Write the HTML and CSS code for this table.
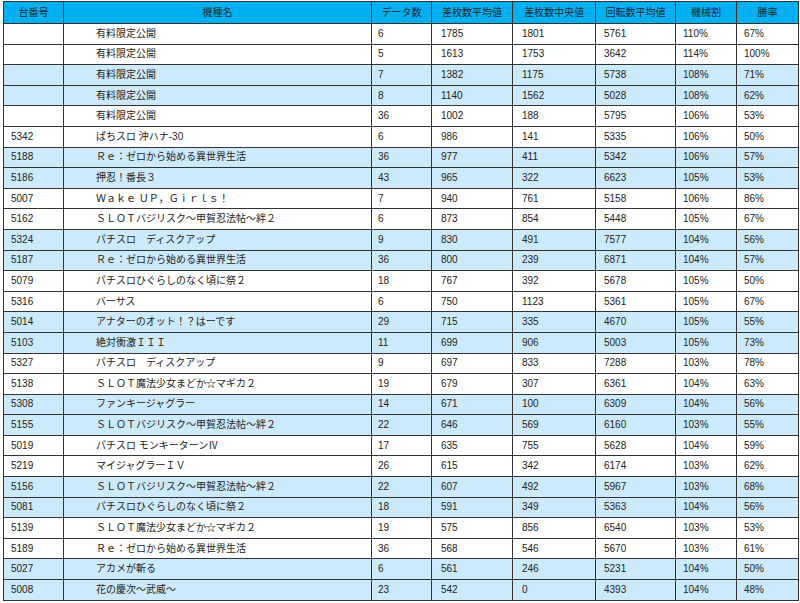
FILE: index.html
```html
<!DOCTYPE html>
<html lang="ja">
<head>
<meta charset="utf-8">
<title>機種別データ</title>
<link rel="stylesheet" href="styles.css">
</head>
<body>
<table class="data">
<colgroup>
<col class="c-no"><col class="c-name"><col class="c-cnt"><col class="c-avg"><col class="c-med"><col class="c-rot"><col class="c-rate"><col class="c-win">
</colgroup>
<thead>
<tr><th>台番号</th><th>機種名</th><th>データ数</th><th>差枚数平均値</th><th>差枚数中央値</th><th>回転数平均値</th><th>機械割</th><th>勝率</th></tr>
</thead>
<tbody>
<tr><td></td><td class="name">有料限定公開</td><td class="cnt">6</td><td class="avg">1785</td><td class="med">1801</td><td class="rot">5761</td><td>110%</td><td>67%</td></tr>
<tr><td></td><td class="name">有料限定公開</td><td class="cnt">5</td><td class="avg">1613</td><td class="med">1753</td><td class="rot">3642</td><td>114%</td><td>100%</td></tr>
<tr class="alt"><td></td><td class="name">有料限定公開</td><td class="cnt">7</td><td class="avg">1382</td><td class="med">1175</td><td class="rot">5738</td><td>108%</td><td>71%</td></tr>
<tr class="alt"><td></td><td class="name">有料限定公開</td><td class="cnt">8</td><td class="avg">1140</td><td class="med">1562</td><td class="rot">5028</td><td>108%</td><td>62%</td></tr>
<tr><td></td><td class="name">有料限定公開</td><td class="cnt">36</td><td class="avg">1002</td><td class="med">188</td><td class="rot">5795</td><td>106%</td><td>53%</td></tr>
<tr><td>5342</td><td class="name">ぱちスロ 沖ハナ-30</td><td class="cnt">6</td><td class="avg">986</td><td class="med">141</td><td class="rot">5335</td><td>106%</td><td>50%</td></tr>
<tr class="alt"><td>5188</td><td class="name">Ｒｅ：ゼロから始める異世界生活</td><td class="cnt">36</td><td class="avg">977</td><td class="med">411</td><td class="rot">5342</td><td>106%</td><td>57%</td></tr>
<tr class="alt"><td>5186</td><td class="name">押忍！番長３</td><td class="cnt">43</td><td class="avg">965</td><td class="med">322</td><td class="rot">6623</td><td>105%</td><td>53%</td></tr>
<tr><td>5007</td><td class="name">Ｗａｋｅ ＵＰ，Ｇｉｒｌｓ！</td><td class="cnt">7</td><td class="avg">940</td><td class="med">761</td><td class="rot">5158</td><td>106%</td><td>86%</td></tr>
<tr><td>5162</td><td class="name">ＳＬＯＴバジリスク～甲賀忍法帖～絆２</td><td class="cnt">6</td><td class="avg">873</td><td class="med">854</td><td class="rot">5448</td><td>105%</td><td>67%</td></tr>
<tr class="alt"><td>5324</td><td class="name">パチスロ　ディスクアップ</td><td class="cnt">9</td><td class="avg">830</td><td class="med">491</td><td class="rot">7577</td><td>104%</td><td>56%</td></tr>
<tr class="alt"><td>5187</td><td class="name">Ｒｅ：ゼロから始める異世界生活</td><td class="cnt">36</td><td class="avg">800</td><td class="med">239</td><td class="rot">6871</td><td>104%</td><td>57%</td></tr>
<tr><td>5079</td><td class="name">パチスロひぐらしのなく頃に祭２</td><td class="cnt">18</td><td class="avg">767</td><td class="med">392</td><td class="rot">5678</td><td>105%</td><td>50%</td></tr>
<tr><td>5316</td><td class="name">バーサス</td><td class="cnt">6</td><td class="avg">750</td><td class="med">1123</td><td class="rot">5361</td><td>105%</td><td>67%</td></tr>
<tr class="alt"><td>5014</td><td class="name">アナターのオット！？はーです</td><td class="cnt">29</td><td class="avg">715</td><td class="med">335</td><td class="rot">4670</td><td>105%</td><td>55%</td></tr>
<tr class="alt"><td>5103</td><td class="name">絶対衝激ＩＩＩ</td><td class="cnt">11</td><td class="avg">699</td><td class="med">906</td><td class="rot">5003</td><td>105%</td><td>73%</td></tr>
<tr><td>5327</td><td class="name">パチスロ　ディスクアップ</td><td class="cnt">9</td><td class="avg">697</td><td class="med">833</td><td class="rot">7288</td><td>103%</td><td>78%</td></tr>
<tr><td>5138</td><td class="name">ＳＬＯＴ魔法少女まどか☆マギカ２</td><td class="cnt">19</td><td class="avg">679</td><td class="med">307</td><td class="rot">6361</td><td>104%</td><td>63%</td></tr>
<tr class="alt"><td>5308</td><td class="name">ファンキージャグラー</td><td class="cnt">14</td><td class="avg">671</td><td class="med">100</td><td class="rot">6309</td><td>104%</td><td>56%</td></tr>
<tr class="alt"><td>5155</td><td class="name">ＳＬＯＴバジリスク～甲賀忍法帖～絆２</td><td class="cnt">22</td><td class="avg">646</td><td class="med">569</td><td class="rot">6160</td><td>103%</td><td>55%</td></tr>
<tr><td>5019</td><td class="name">パチスロ モンキーターンⅣ</td><td class="cnt">17</td><td class="avg">635</td><td class="med">755</td><td class="rot">5628</td><td>104%</td><td>59%</td></tr>
<tr><td>5219</td><td class="name">マイジャグラーＩＶ</td><td class="cnt">26</td><td class="avg">615</td><td class="med">342</td><td class="rot">6174</td><td>103%</td><td>62%</td></tr>
<tr class="alt"><td>5156</td><td class="name">ＳＬＯＴバジリスク～甲賀忍法帖～絆２</td><td class="cnt">22</td><td class="avg">607</td><td class="med">492</td><td class="rot">5967</td><td>103%</td><td>68%</td></tr>
<tr class="alt"><td>5081</td><td class="name">パチスロひぐらしのなく頃に祭２</td><td class="cnt">18</td><td class="avg">591</td><td class="med">349</td><td class="rot">5363</td><td>104%</td><td>56%</td></tr>
<tr><td>5139</td><td class="name">ＳＬＯＴ魔法少女まどか☆マギカ２</td><td class="cnt">19</td><td class="avg">575</td><td class="med">856</td><td class="rot">6540</td><td>103%</td><td>53%</td></tr>
<tr><td>5189</td><td class="name">Ｒｅ：ゼロから始める異世界生活</td><td class="cnt">36</td><td class="avg">568</td><td class="med">546</td><td class="rot">5670</td><td>103%</td><td>61%</td></tr>
<tr class="alt"><td>5027</td><td class="name">アカメが斬る</td><td class="cnt">6</td><td class="avg">561</td><td class="med">246</td><td class="rot">5231</td><td>104%</td><td>50%</td></tr>
<tr class="alt"><td>5008</td><td class="name">花の慶次～武威～</td><td class="cnt">23</td><td class="avg">542</td><td class="med">0</td><td class="rot">4393</td><td>104%</td><td>48%</td></tr>
</tbody>
</table>
</body>
</html>
```

FILE: styles.css
```css
html, body {
  margin: 0;
  padding: 0;
  background: #ffffff;
}

body {
  padding: 1px 2px 0 3px;
  font-family: "Liberation Sans", "Noto Sans CJK JP", sans-serif;
  font-size: 10px;
  color: #222222;
}

.data {
  border-collapse: collapse;
  table-layout: fixed;
  width: 795px;
}

.c-no { width: 60px; }
.c-name { width: 308px; }
.c-cnt { width: 60px; }
.c-avg { width: 81px; }
.c-med { width: 83px; }
.c-rot { width: 80px; }
.c-rate { width: 61px; }
.c-win { width: 62px; }

.data th,
.data td {
  border: 1px solid #333333;
  padding: 0 0 0 7px;
  text-align: left;
  white-space: nowrap;
  overflow: hidden;
  line-height: 12px;
}

.data thead tr {
  height: 22px;
}

.data th {
  background: #00b0f0;
  color: #1e2a33;
  font-weight: normal;
  text-align: center;
  padding: 0;
}

.data tbody tr {
  height: 20.6px;
}

.data tbody tr.alt td {
  background: #cdeafc;
}

.data td.name { padding-left: 32px; }
.data td.cnt { padding-left: 6px; }
.data td.avg { padding-left: 9px; }
.data td.med { padding-left: 9px; }
.data td.rot { padding-left: 8px; }
```
